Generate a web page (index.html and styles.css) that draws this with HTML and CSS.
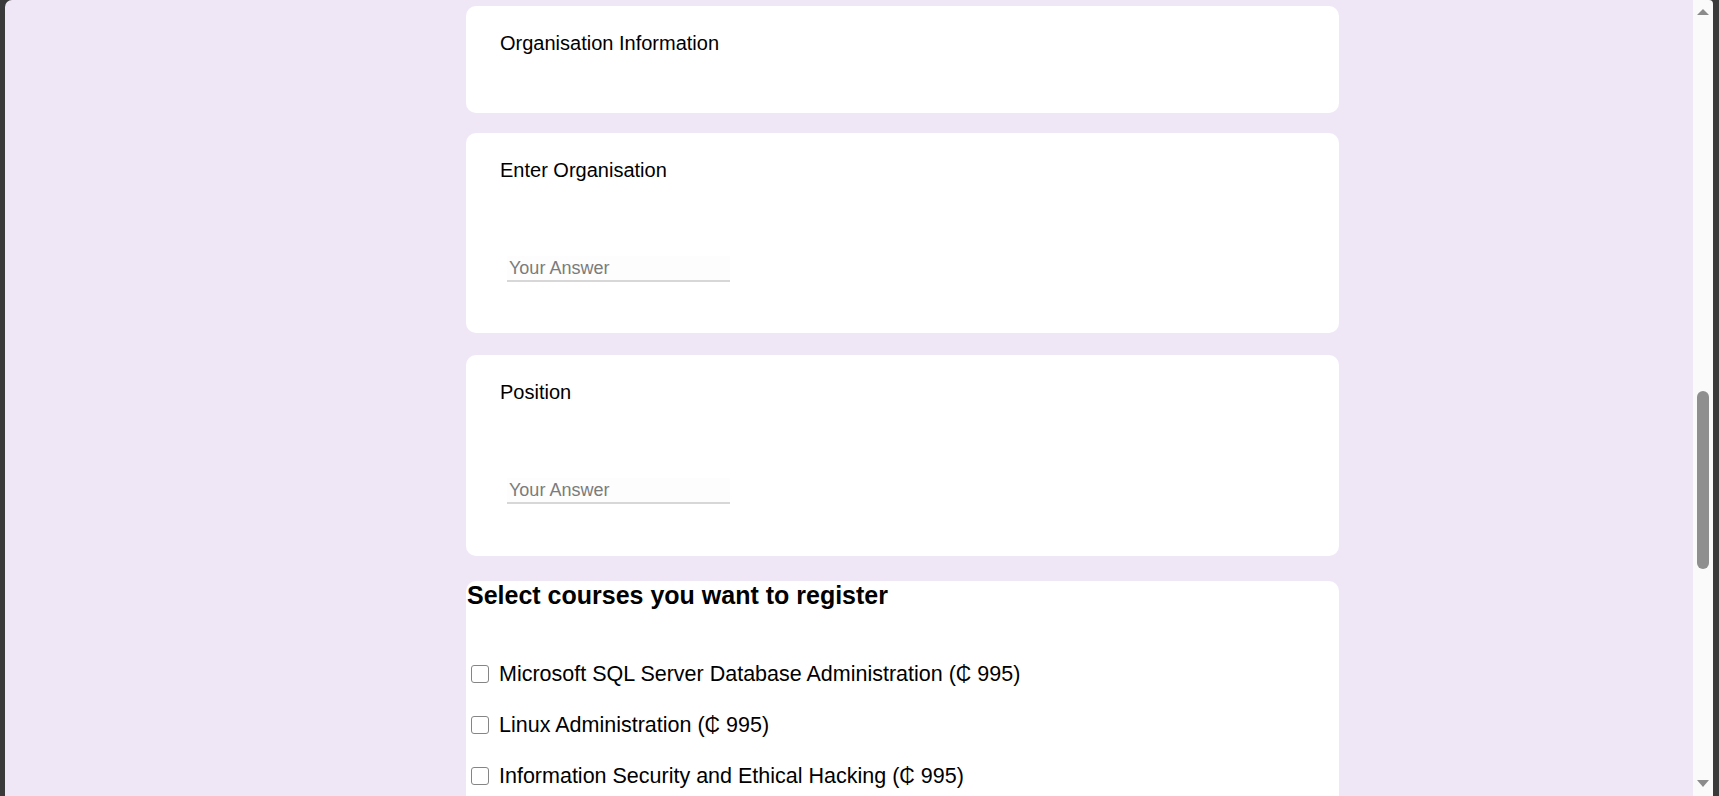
FILE: index.html
```html
<!DOCTYPE html>
<html lang="en">
<head>
<meta charset="utf-8">
<title>Registration Form</title>
<link rel="stylesheet" href="styles.css">
</head>
<body>
<div class="window">
  <div class="frame-left"></div>
  <main class="viewport">
    <form class="form">
      <section class="card card-title">
        <p class="label">Organisation Information</p>
      </section>
      <section class="card card-field">
        <label class="label" for="org">Enter Organisation</label>
        <input class="answer" id="org" type="text" placeholder="Your Answer">
      </section>
      <section class="card card-field card-field-tall">
        <label class="label" for="pos">Position</label>
        <input class="answer" id="pos" type="text" placeholder="Your Answer">
      </section>
      <section class="card card-courses">
        <h2 class="courses-title">Select courses you want to register</h2>
        <div class="course-list">
          <label class="course"><input class="check" type="checkbox"><span>Microsoft SQL Server Database Administration (₵ 995)</span></label>
          <label class="course"><input class="check" type="checkbox"><span>Linux Administration (₵ 995)</span></label>
          <label class="course"><input class="check" type="checkbox"><span>Information Security and Ethical Hacking (₵ 995)</span></label>
        </div>
      </section>
    </form>
  </main>
  <div class="scrollbar">
    <svg class="arrow arrow-up" width="12" height="6" viewBox="0 0 12 6"><polygon points="6,0 12,6 0,6" fill="#8b8b8b"/></svg>
    <div class="thumb"></div>
    <div class="track-rest"></div>
    <svg class="arrow arrow-down" width="12" height="7" viewBox="0 0 12 7"><polygon points="0,0 12,0 6,7" fill="#8b8b8b"/></svg>
  </div>
  <div class="frame-right"></div>
</div>
</body>
</html>
```

FILE: styles.css
```css
* {
  box-sizing: border-box;
}

html, body {
  margin: 0;
  padding: 0;
  height: 100%;
  overflow: hidden;
}

body {
  font-family: "Liberation Sans", Arial, sans-serif;
  color: #000;
  background: #3a3a3a;
}

.window {
  display: flex;
  height: 796px;
  width: 1719px;
  background: #3a3a3a;
}

.frame-left {
  width: 5px;
  flex: none;
}

.viewport {
  flex: 1;
  background: #efe7f6;
  border-top-left-radius: 7px;
  overflow: hidden;
}

.form {
  display: flex;
  flex-direction: column;
  gap: 20px;
  width: 873px;
  margin: 0 0 0 461px;
  padding-top: 6px;
}

.card {
  background: #fff;
  border-radius: 10px;
  padding: 26px 34px 25px;
  flex: none;
}

.card-title {
  height: 107px;
}

.card-field {
  height: 200px;
  display: flex;
  flex-direction: column;
  align-items: flex-start;
}

.card-field-tall {
  height: 201px;
  margin-top: 2px;
}

.label {
  display: block;
  margin: 0;
  font-size: 20px;
  line-height: 23px;
}

.answer {
  margin: 74px 0 0 7px;
  width: 223px;
  height: 26px;
  padding: 0 2px;
  border: none;
  border-bottom: 2px solid #d7d7d7;
  background: #fdfdfd;
  font-family: "Liberation Sans", Arial, sans-serif;
  font-size: 18px;
  outline: none;
}

.answer::placeholder {
  color: #7b7b7b;
}

.card-courses {
  padding: 0;
  margin-top: 5px;
  height: 260px;
}

.courses-title {
  margin: 0 0 52px;
  font-size: 25px;
  font-weight: bold;
  line-height: 29px;
  padding-left: 1px;
}

.course-list {
  display: flex;
  flex-direction: column;
  gap: 26px;
}

.course {
  display: flex;
  align-items: center;
  font-size: 21.5px;
  line-height: 25px;
}

.check {
  appearance: none;
  -webkit-appearance: none;
  width: 18px;
  height: 18px;
  margin: 0 10px 0 5px;
  border: 1.5px solid #858585;
  border-radius: 3px;
  background: #fff;
  flex: none;
  position: relative;
  top: -1px;
}

.scrollbar {
  width: 20px;
  flex: none;
  background: #fafafa;
  border-top-right-radius: 4px;
  display: flex;
  flex-direction: column;
  align-items: center;
}

.arrow {
  display: block;
  flex: none;
}

.arrow-up {
  margin-top: 9px;
}

.thumb {
  width: 12px;
  height: 178px;
  margin-top: 376px;
  border-radius: 6px;
  background: #8f8f8f;
  flex: none;
}

.track-rest {
  flex: 1;
}

.arrow-down {
  margin-bottom: 9px;
}

.frame-right {
  width: 6px;
  flex: none;
}
```
